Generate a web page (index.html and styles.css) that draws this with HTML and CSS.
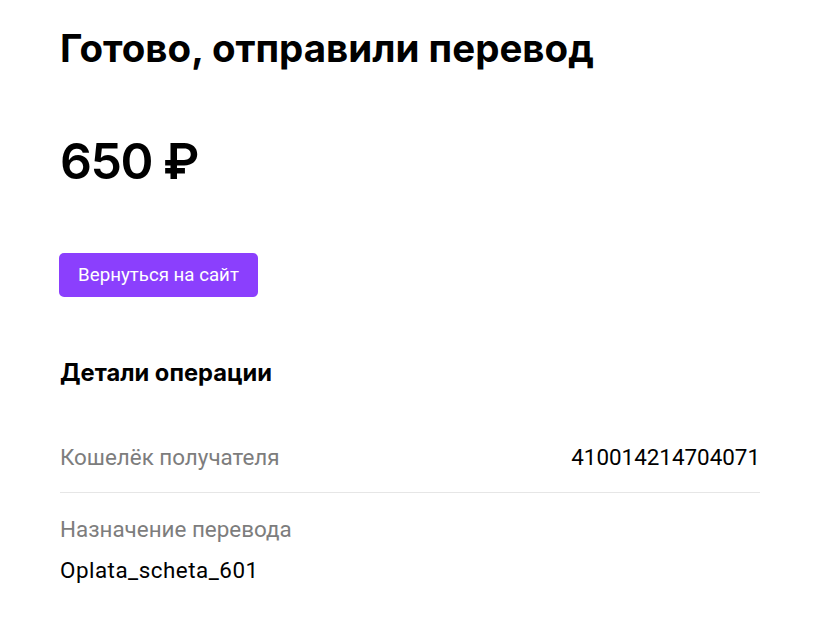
FILE: index.html
```html
<!DOCTYPE html>
<html lang="ru">
<head>
<meta charset="utf-8">
<link rel="stylesheet" href="styles.css">
</head>
<body>
<main class="page">
  <h1 class="title">Готово, отправили перевод</h1>
  <div class="amount">650 ₽</div>
  <button class="back">Вернуться на сайт</button>
  <h2 class="details-title">Детали операции</h2>
  <div class="row row-inline">
    <span class="label">Кошелёк получателя</span>
    <span class="value">410014214704071</span>
  </div>
  <div class="row row-stack">
    <span class="label">Назначение перевода</span>
    <span class="value value-wide">Oplata_scheta_601</span>
  </div>
</main>
</body>
</html>
```
FILE: styles.css
```css
* { box-sizing: border-box; }
html, body { margin: 0; background: #fff; }
body { font-family: "Inter", "Noto Sans", sans-serif; color: #000; }
.page {
  width: 700px;
  margin-left: 60px;
  padding-top: 24px;
  display: flex;
  flex-direction: column;
  align-items: flex-start;
}
.title {
  margin: 0;
  font-size: 38.5px;
  font-weight: 700;
  line-height: 48px;
  letter-spacing: 0;
}
.amount {
  margin-top: 59px;
  font-size: 50px;
  font-weight: 600;
  line-height: 60px;
  letter-spacing: -1.5px;
}
.back {
  margin-top: 62px;
  height: 44px;
  width: 199px;
  border: 0;
  border-radius: 5px;
  background: #8b3ffd;
  color: #fff;
  font-family: "Roboto", sans-serif;
  font-size: 18.7px;
  padding: 0;
  margin-left: -1px;
}
.details-title {
  margin: 61px 0 0;
  font-size: 23.7px;
  font-weight: 700;
  line-height: 30px;
}
.row {
  width: 100%;
  font-family: "Roboto", sans-serif;
  font-size: 22.4px;
}
.row-inline {
  margin-top: 55px;
  display: flex;
  justify-content: space-between;
  align-items: center;
  padding-bottom: 21px;
  border-bottom: 1px solid #e6e6e6;
}
.row-stack {
  display: flex;
  flex-direction: column;
  gap: 13px;
  padding-top: 22px;
}
.label { color: #7d7d7d; line-height: 28px; }
.value { color: #000; line-height: 28px; }
.value-wide { letter-spacing: 0.5px; }
```
